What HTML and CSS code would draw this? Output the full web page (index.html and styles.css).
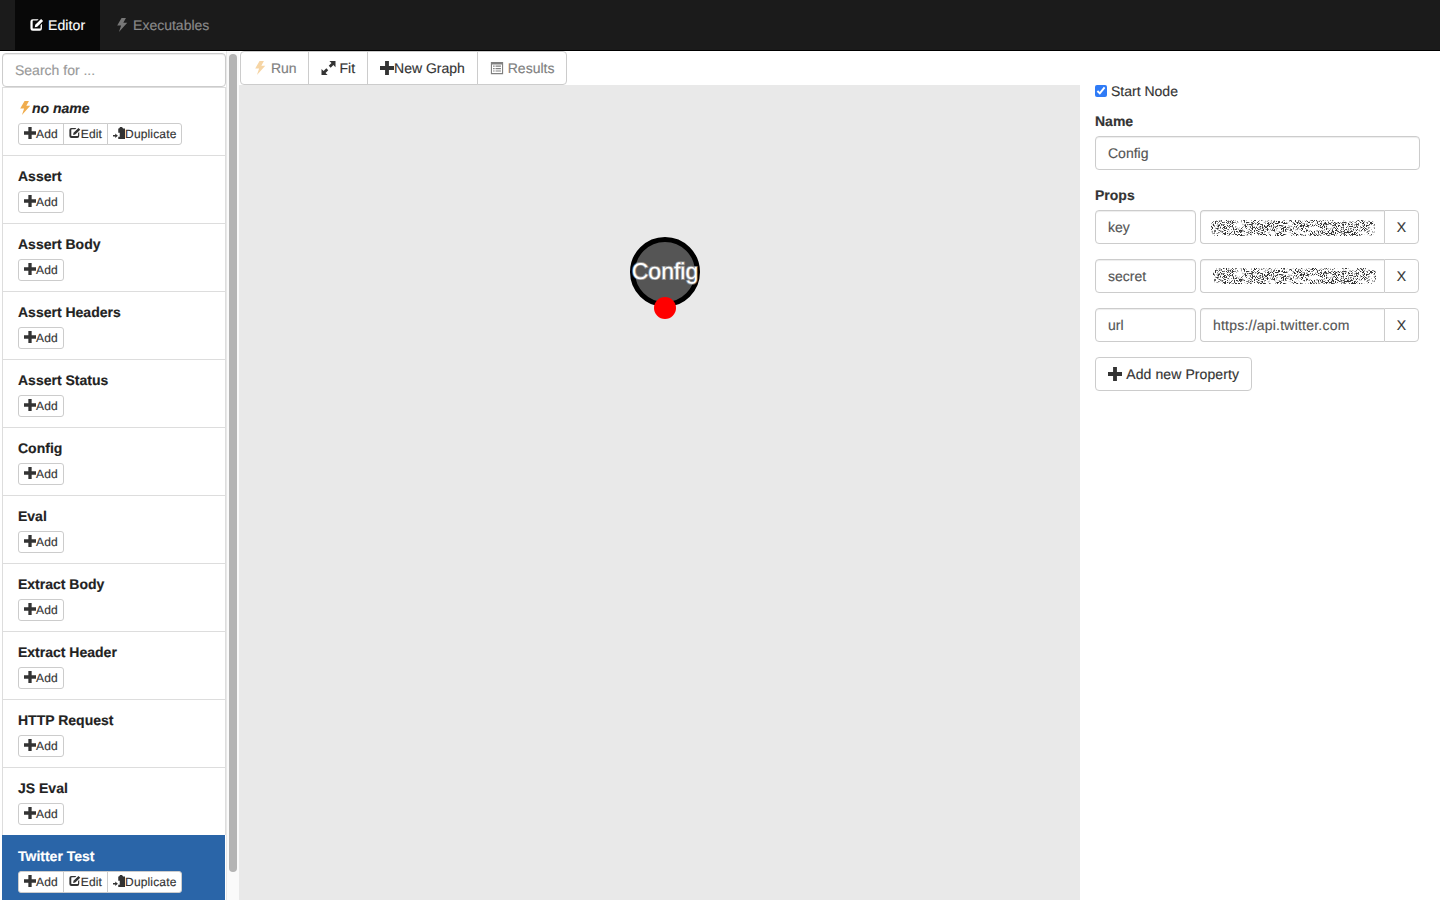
FILE: index.html
```html
<!DOCTYPE html>
<html lang="en">

<head>
	<meta charset="UTF-8">
	<title>Graph Editor</title>
	<link rel="stylesheet" href="styles.css">
</head>

<body>
	<svg class="icon-defs" aria-hidden="true">
		<symbol id="i-plus" viewBox="0 0 16 16"><path d="M5.800 0h4.400v5.800H16v4.400h-5.800V16H5.800v-5.800H0V5.800h5.800z" /></symbol>
		<symbol id="i-edit" viewBox="0 0 16 16"><path d="M2.800 2H10L8.300 3.700H3.400a.7.7 0 0 0-.7.7v8.200a.7.7 0 0 0 .7.7h8.200a.7.7 0 0 0 .7-.7V9.200L14 7.500v5.700A2.800 2.800 0 0 1 11.200 16H2.800A2.800 2.800 0 0 1 0 13.200V4.800A2.800 2.800 0 0 1 2.800 2z" transform="translate(.5 -.5) scale(.94)" /><path d="M6 7.800 12.700 1.200 15 3.500 8.300 10.100 5.500 10.500z" /></symbol>
		<symbol id="i-flash" viewBox="0 0 16 16"><path d="M7.500 0h5l-3 5.500H14L4.500 16 7 8.500H2.500z" /></symbol>
		<symbol id="i-fit" viewBox="0 0 16 16"><path d="M9 0h7v7l-2.400-2.400-3.100 3.100-2.200-2.200 3.100-3.100zM0 16V9l2.400 2.400 3.100-3.100 2.200 2.200-3.100 3.100L7 16z" /></symbol>
		<symbol id="i-list" viewBox="0 0 16 16"><path fill-rule="evenodd" d="M1 1h14v14H1zm1.300 3v9.700h11.400V4zM3.500 5.200h1.800v1.300H3.500zm2.800 0h6.200v1.300H6.300zM3.500 8h1.800v1.300H3.500zm2.800 0h6.200v1.300H6.300zm-2.800 2.800h1.800v1.300H3.500zm2.800 0h6.200v1.300H6.300z" /></symbol>
		<symbol id="i-copy" viewBox="0 0 16 16"><path d="M8 2 9.500 0H12l1.500 2H16v14H7v-3h2V7.500H7V2zM0 10.500h3V8.500l3.500 3L3 14.500V12.500H0z" /></symbol>
		<filter id="scramble" x="0" y="0" width="100%" height="100%">
			<feTurbulence type="fractalNoise" baseFrequency="1.1" numOctaves="1" seed="4" result="fine" />
			<feColorMatrix in="fine" type="matrix" values="0 0 0 0 0.2  0 0 0 0 0.2  0 0 0 0 0.2  9 9 0 0 -8.900" result="dots" />
			<feTurbulence type="fractalNoise" baseFrequency="0.12 0.25" numOctaves="2" seed="9" />
			<feColorMatrix type="matrix" values="0 0 0 0 0  0 0 0 0 0  0 0 0 0 0  6 0 0 0 -2" result="patches" />
			<feComposite in="dots" in2="patches" operator="in" result="masked" />
			<feComposite in="masked" in2="SourceAlpha" operator="in" />
		</filter>
	</svg>

	<nav class="navbar">
		<a class="nav-tab active"><svg class="icon"><use href="#i-edit" /></svg> Editor</a>
		<a class="nav-tab"><svg class="icon icon-flash"><use href="#i-flash" /></svg> Executables</a>
	</nav>

	<main class="layout">
		<aside class="sidebar">
			<div class="sidebar-body">
				<input class="form-control search" type="text" placeholder="Search for ...">

				<div class="item">
					<h4 class="item-name"><em><svg class="icon icon-flash-run"><use href="#i-flash" /></svg>no name</em></h4>
					<div class="btn-group">
						<button class="btn-xs"><svg class="icon"><use href="#i-plus" /></svg>Add</button>
						<button class="btn-xs"><svg class="icon"><use href="#i-edit" /></svg>Edit</button>
						<button class="btn-xs"><svg class="icon"><use href="#i-copy" /></svg>Duplicate</button>
					</div>
				</div>
				<div class="item">
					<h4 class="item-name">Assert</h4>
					<div class="btn-group"><button class="btn-xs"><svg class="icon"><use href="#i-plus" /></svg>Add</button></div>
				</div>
				<div class="item">
					<h4 class="item-name">Assert Body</h4>
					<div class="btn-group"><button class="btn-xs"><svg class="icon"><use href="#i-plus" /></svg>Add</button></div>
				</div>
				<div class="item">
					<h4 class="item-name">Assert Headers</h4>
					<div class="btn-group"><button class="btn-xs"><svg class="icon"><use href="#i-plus" /></svg>Add</button></div>
				</div>
				<div class="item">
					<h4 class="item-name">Assert Status</h4>
					<div class="btn-group"><button class="btn-xs"><svg class="icon"><use href="#i-plus" /></svg>Add</button></div>
				</div>
				<div class="item">
					<h4 class="item-name">Config</h4>
					<div class="btn-group"><button class="btn-xs"><svg class="icon"><use href="#i-plus" /></svg>Add</button></div>
				</div>
				<div class="item">
					<h4 class="item-name">Eval</h4>
					<div class="btn-group"><button class="btn-xs"><svg class="icon"><use href="#i-plus" /></svg>Add</button></div>
				</div>
				<div class="item">
					<h4 class="item-name">Extract Body</h4>
					<div class="btn-group"><button class="btn-xs"><svg class="icon"><use href="#i-plus" /></svg>Add</button></div>
				</div>
				<div class="item">
					<h4 class="item-name">Extract Header</h4>
					<div class="btn-group"><button class="btn-xs"><svg class="icon"><use href="#i-plus" /></svg>Add</button></div>
				</div>
				<div class="item">
					<h4 class="item-name">HTTP Request</h4>
					<div class="btn-group"><button class="btn-xs"><svg class="icon"><use href="#i-plus" /></svg>Add</button></div>
				</div>
				<div class="item">
					<h4 class="item-name">JS Eval</h4>
					<div class="btn-group"><button class="btn-xs"><svg class="icon"><use href="#i-plus" /></svg>Add</button></div>
				</div>
				<div class="item selected">
					<h4 class="item-name">Twitter Test</h4>
					<div class="btn-group">
						<button class="btn-xs"><svg class="icon"><use href="#i-plus" /></svg>Add</button>
						<button class="btn-xs"><svg class="icon"><use href="#i-edit" /></svg>Edit</button>
						<button class="btn-xs"><svg class="icon"><use href="#i-copy" /></svg>Duplicate</button>
					</div>
				</div>
			</div>
			<div class="scroll-track"><div class="scroll-thumb"></div></div>
		</aside>

		<section class="center">
			<div class="toolbar">
				<button class="tool tool-run disabled"><svg class="icon icon-flash-run"><use href="#i-flash" /></svg> Run</button>
				<button class="tool tool-fit"><svg class="icon"><use href="#i-fit" /></svg> Fit</button>
				<button class="tool"><svg class="icon"><use href="#i-plus" /></svg>New Graph</button>
				<button class="tool disabled"><svg class="icon"><use href="#i-list" /></svg> Results</button>
			</div>
			<div class="canvas">
				<svg class="node" width="80" height="90" viewBox="0 0 80 90">
					<circle cx="40" cy="40" r="32.500" fill="#555" stroke="#000" stroke-width="5" />
					<text x="40" y="47" class="node-label">Config</text>
					<circle cx="40" cy="76" r="11" fill="#f00" />
				</svg>
			</div>
		</section>

		<aside class="details">
			<label class="start-node"><input type="checkbox" checked> Start Node</label>

			<div class="form-group">
				<label class="field-label">Name</label>
				<input class="form-control" type="text" value="Config">
			</div>

			<div class="form-group props">
				<label class="field-label">Props</label>
				<div class="prop-row">
					<input class="form-control" type="text" value="key">
					<div class="input-group">
						<div class="form-control scrambled"><svg width="166" height="18"><rect x="1" y="1" width="164" height="16" rx="6" filter="url(#scramble)" /></svg></div>
						<span class="addon">X</span>
					</div>
				</div>
				<div class="prop-row">
					<input class="form-control" type="text" value="secret">
					<div class="input-group">
						<div class="form-control scrambled"><svg width="166" height="18"><rect x="3" y="0" width="163" height="16" rx="6" filter="url(#scramble)" /></svg></div>
						<span class="addon">X</span>
					</div>
				</div>
				<div class="prop-row">
					<input class="form-control" type="text" value="url">
					<div class="input-group">
						<input class="form-control url-value" type="text" value="https://api.twitter.com">
						<span class="addon">X</span>
					</div>
				</div>
			</div>

			<button class="add-prop"><svg class="icon"><use href="#i-plus" /></svg> Add new Property</button>
		</aside>
	</main>
</body>

</html>
```

FILE: styles.css
```css
* {
	margin: 0;
	padding: 0;
	box-sizing: border-box;
}

body {
	height: 900px;
	overflow: hidden;
	background: #fff;
	color: #333;
	font-family: "Liberation Sans", Arial, sans-serif;
	font-size: 14px;
	line-height: 20px;
	text-rendering: geometricPrecision;
	-webkit-text-stroke: 0.15px;
}

.icon-defs {
	display: none;
}

.icon {
	width: 1em;
	height: 1em;
	fill: currentColor;
	vertical-align: -0.12em;
}

.icon-flash-run {
	fill: #f0ad4e;
}

/* top bar */
.navbar {
	display: flex;
	height: 51px;
	padding-left: 15px;
	background: #1b1b1b;
	border-bottom: 1px solid #000;
}

.nav-tab {
	height: 50px;
	padding: 15px;
	color: #8a8a8a;
}

.nav-tab.active {
	background: #080808;
	color: #fff;
	letter-spacing: 0.1px;
}

.icon-flash {
	fill: #777;
}

/* layout */
.layout {
	display: grid;
	grid-template-columns: 239px 841px 1fr;
	height: 849px;
}

.sidebar {
	display: flex;
	height: 849px;
	overflow: hidden;
}

.sidebar-body {
	margin: 2px 0 0 2px;
	flex: none;
	width: 224px;
}

.scroll-track {
	width: 13px;
	background: #fafafa;
	border-left: 1px solid #e8e8e8;
	padding: 3px 0 0 2px;
}

.scroll-thumb {
	width: 8px;
	height: 818px;
	background: #b4b4b4;
	border-radius: 4px;
}

.form-control {
	display: block;
	width: 100%;
	height: 34px;
	padding: 6px 12px;
	color: #555;
	background: #fff;
	border: 1px solid #ccc;
	border-radius: 4px;
	font: inherit;
	text-rendering: inherit;
	box-shadow: inset 0 1px 1px rgba(0, 0, 0, 0.075);
}

.form-control::placeholder {
	color: #999;
}

/* node list */
.item {
	height: 68px;
	padding: 10px 15px;
	background: #fff;
	border: 1px solid #ddd;
	border-bottom: 0;
}

.item-name {
	height: 20px;
	margin-bottom: 5px;
	font-size: 14px;
	line-height: 20px;
	font-weight: bold;
	color: #222;
}

.item.selected {
	margin-right: 1px;
	border: 0;
	padding: 11px 15px 10px 16px;
	background: #2a65a8;
}

.item.selected .item-name {
	color: #fff;
}

.btn-group {
	display: flex;
}

.btn-xs {
	padding: 1px 5px;
	font: inherit;
	font-size: 12px;
	line-height: 18px;
	letter-spacing: 0.15px;
	text-rendering: inherit;
	color: #333;
	background: #fff;
	border: 1px solid #ccc;
	margin-left: -1px;
}

.btn-xs:first-child {
	margin-left: 0;
	border-radius: 3px 0 0 3px;
}

.btn-xs:last-child {
	border-top-right-radius: 3px;
	border-bottom-right-radius: 3px;
}

/* center column */
.center {
	display: flex;
	flex-direction: column;
}

.toolbar {
	display: flex;
	height: 34px;
	margin-left: 1px;
}

.tool {
	height: 34px;
	padding: 6px 12px;
	font: inherit;
	text-rendering: inherit;
	color: #333;
	background: #fff;
	border: 1px solid #ccc;
	margin-left: -1px;
}

.tool:first-child {
	margin-left: 0;
	border-radius: 4px 0 0 4px;
}

.tool:last-child {
	border-radius: 0 4px 4px 0;
}

.tool-run {
	padding-right: 11px;
}

.tool-fit .icon {
	width: 15px;
}

.tool.disabled {
	color: #808080;
}

.tool.disabled .icon-flash-run {
	fill: #f6d5a5;
}

.canvas {
	position: relative;
	flex: 1;
	background: #e9e9e9;
}

.node {
	position: absolute;
	left: 386px;
	top: 147px;
}

.node-label {
	font-size: 23px;
	text-anchor: middle;
	fill: #fff;
	stroke: rgba(255, 255, 255, 0.35);
	stroke-width: 1.800px;
}

/* right panel */
.details {
	padding: 30px 20px 0 15px;
}

.start-node {
	display: flex;
	align-items: center;
	gap: 4px;
	height: 20px;
	margin-bottom: 10px;
}

.start-node input {
	width: 12px;
	height: 12px;
	accent-color: #2f7bf6;
}

.field-label {
	display: block;
	margin-bottom: 5px;
	font-weight: bold;
}

.form-group {
	margin-bottom: 15px;
}

.prop-row {
	display: grid;
	grid-template-columns: 101px 219px;
	gap: 4px;
	margin-bottom: 15px;
}

.input-group {
	display: flex;
}

.input-group .form-control {
	flex: 1;
	min-width: 0;
	border-radius: 4px 0 0 4px;
	border-right: 0;
}

.url-value {
	letter-spacing: 0.22px;
}

.scrambled {
	padding: 8px 0 0 9px;
}

.addon {
	width: 35px;
	height: 34px;
	line-height: 32px;
	text-align: center;
	color: #333;
	background: #fff;
	border: 1px solid #ccc;
	border-radius: 0 4px 4px 0;
}

.add-prop {
	height: 34px;
	padding: 6px 12px;
	font: inherit;
	letter-spacing: 0.1px;
	text-rendering: inherit;
	color: #333;
	background: #fff;
	border: 1px solid #ccc;
	border-radius: 4px;
}

.add-prop .icon {
	margin-right: 1px;
}
```
